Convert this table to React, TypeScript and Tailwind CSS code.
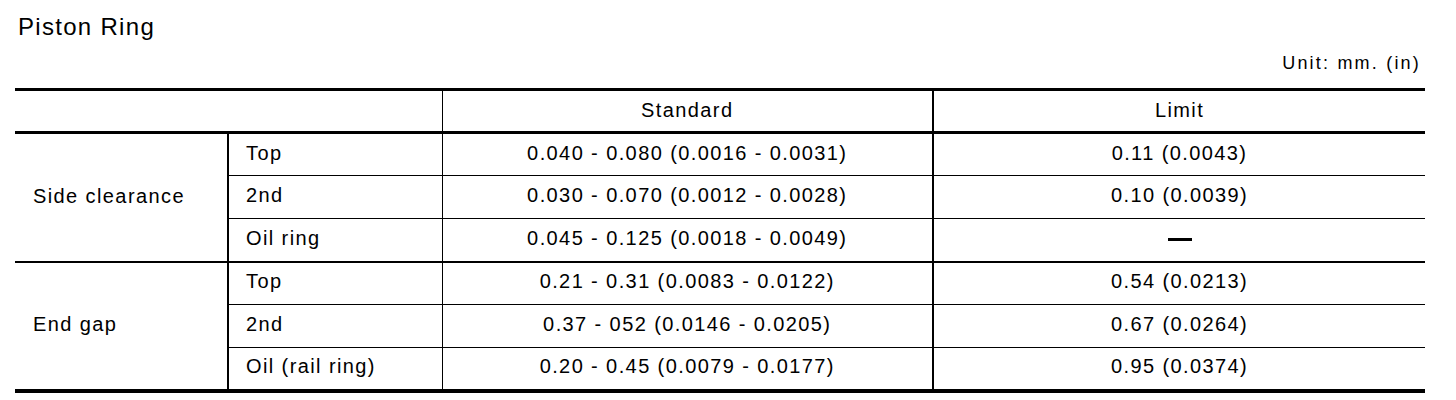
import React from "react";

const rows = [
  { group: "Side clearance", sub: "Top", std: "0.040 - 0.080 (0.0016 - 0.0031)", lim: "0.11 (0.0043)" },
  { group: "", sub: "2nd", std: "0.030 - 0.070 (0.0012 - 0.0028)", lim: "0.10 (0.0039)" },
  { group: "", sub: "Oil ring", std: "0.045 - 0.125 (0.0018 - 0.0049)", lim: "—" },
  { group: "End gap", sub: "Top", std: "0.21 - 0.31 (0.0083 - 0.0122)", lim: "0.54 (0.0213)" },
  { group: "", sub: "2nd", std: "0.37 - 052 (0.0146 - 0.0205)", lim: "0.67 (0.0264)" },
  { group: "", sub: "Oil (rail ring)", std: "0.20 - 0.45 (0.0079 - 0.0177)", lim: "0.95 (0.0374)" },
];

export default function App() {
  return (
    <div
      className="w-[1456px] h-[400px] bg-white text-black px-[15px] pt-[12px]"
      style={{ fontFamily: '"Liberation Sans", Arial, sans-serif' }}
    >
      <div className="pl-[3px] text-[24px] leading-[30px] tracking-[1.3px]">Piston Ring</div>
      <div className="flex justify-end pr-[20px] mt-[11px] text-[18px] leading-[20px] tracking-[2.2px]">Unit: mm. (in)</div>
      <table className="mt-[15px] w-[1410px] border-collapse text-[20px] tracking-[1.4px] table-fixed">
        <colgroup>
          <col className="w-[213px]" />
          <col className="w-[214px]" />
          <col className="w-[491px]" />
          <col className="w-[492px]" />
        </colgroup>
        <thead>
          <tr className="h-[43px]">
            <th colSpan={2} className="border-t-[3px] border-b-[3px] border-black font-normal"></th>
            <th className="border-t-[3px] border-b-[3px] border-l-[1px] border-black font-normal text-center pb-[3px]">Standard</th>
            <th className="border-t-[3px] border-b-[3px] border-l-[2px] border-black font-normal text-center pb-[3px]">Limit</th>
          </tr>
        </thead>
        <tbody>
          {rows.map((r, i) => {
            const sectionEnd = i === 2;
            const last = i === 5;
            const bb = last ? "border-b-[4px]" : sectionEnd ? "border-b-[2px]" : "border-b-[1px]";
            return (
              <tr key={i} className="h-[43px]">
                {(i === 0 || i === 3) && (
                  <td
                    rowSpan={3}
                    className={`${i === 3 ? "border-b-[4px]" : "border-b-[2px]"} border-black pl-[18px] pb-[3px] align-middle`}
                  >
                    {r.group}
                  </td>
                )}
                <td className={`${bb} border-l-[2px] border-black pl-[17px] pb-[4px]`}>{r.sub}</td>
                <td className={`${bb} border-l-[1px] border-black text-center pb-[4px]`}>{r.std}</td>
                <td className={`${bb} border-l-[2px] border-black text-center pb-[4px]`}>
                  {r.lim === "—" ? (
                    <span className="inline-block w-[24px] h-[3px] bg-black align-middle"></span>
                  ) : (
                    r.lim
                  )}
                </td>
              </tr>
            );
          })}
        </tbody>
      </table>
    </div>
  );
}
